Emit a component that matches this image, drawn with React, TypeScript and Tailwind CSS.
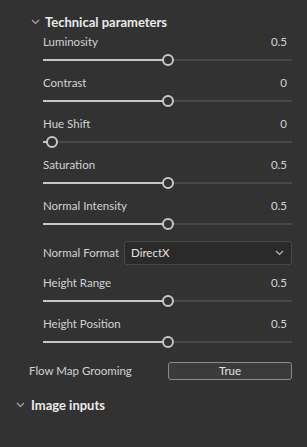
const font = { fontFamily: 'Lato, "Noto Sans", sans-serif' };

function Chevron({ className }: { className?: string }) {
  return (
    <svg width="9" height="6" viewBox="0 0 9 6" className={className}>
      <path d="M1 1 L4.5 4.5 L8 1" fill="none" stroke="currentColor" strokeWidth="1.2" />
    </svg>
  );
}

function Slider({ label, value, pos }: { label: string; value: string; pos: number }) {
  return (
    <div className="h-[41px] flex flex-col">
      <div className="h-4 flex items-center justify-between pr-[5px] text-[11.5px] text-[#d2d2d2]">
        <span>{label}</span>
        <span>{value}</span>
      </div>
      <div className="h-1 shrink-0" />
      <div className="relative h-3 flex items-center">
        <div className="h-[2px] bg-[#c6c6c6]" style={{ width: `${pos * 100}%` }} />
        <div className="h-[2px] flex-1 bg-[#474747]" />
        <div
          className="absolute top-0 w-3 h-3 -ml-[6px] rounded-full border-2 border-[#c6c6c6] bg-[#323232]"
          style={{ left: `${pos * 100}%` }}
        />
      </div>
    </div>
  );
}

export default function App() {
  return (
    <div className="w-[307px] h-[447px] bg-[#323232] overflow-hidden" style={font}>
      <div className="pt-[14px] h-[30px] flex items-center pl-[31px] gap-[5px] text-[#eaeaea]">
        <Chevron className="text-[#a8a8a8]" />
        <span className="text-[13px] font-bold leading-4">Technical parameters</span>
      </div>
      <div className="pl-[43px] pr-[15px] pt-1">
        <Slider label="Luminosity" value="0.5" pos={0.5} />
        <Slider label="Contrast" value="0" pos={0.5} />
        <Slider label="Hue Shift" value="0" pos={0.035} />
        <Slider label="Saturation" value="0.5" pos={0.5} />
        <Slider label="Normal Intensity" value="0.5" pos={0.5} />
        <div className="h-[36px] pt-[2px]">
          <div className="h-6 flex items-center">
            <span className="w-[81px] text-[11.5px] text-[#d2d2d2]">Normal Format</span>
            <div className="flex-1 h-6 flex items-center justify-between pl-[6px] pr-[7px] bg-[#2a2a2a] border border-[#474747] rounded-[3px]">
              <span className="text-[11.5px] text-[#e2e2e2]">DirectX</span>
              <Chevron className="text-[#b8b8b8]" />
            </div>
          </div>
        </div>
        <Slider label="Height Range" value="0.5" pos={0.5} />
        <Slider label="Height Position" value="0.5" pos={0.5} />
      </div>
      <div className="mt-[5px] h-[18px] flex items-center pl-[29px] pr-[15px]">
        <span className="w-[139px] text-[11.5px] text-[#d2d2d2]">Flow Map Grooming</span>
        <div className="flex-1 h-[18px] flex items-center justify-center bg-[#3b3b3b] border border-[#8c8c8c] rounded-[3px] text-[11.5px] text-[#e2e2e2]">
          True
        </div>
      </div>
      <div className="mt-[17px] h-4 flex items-center pl-[16px] gap-[6px] text-[#eaeaea]">
        <Chevron className="text-[#a8a8a8]" />
        <span className="text-[13px] font-bold leading-4">Image inputs</span>
      </div>
    </div>
  );
}
